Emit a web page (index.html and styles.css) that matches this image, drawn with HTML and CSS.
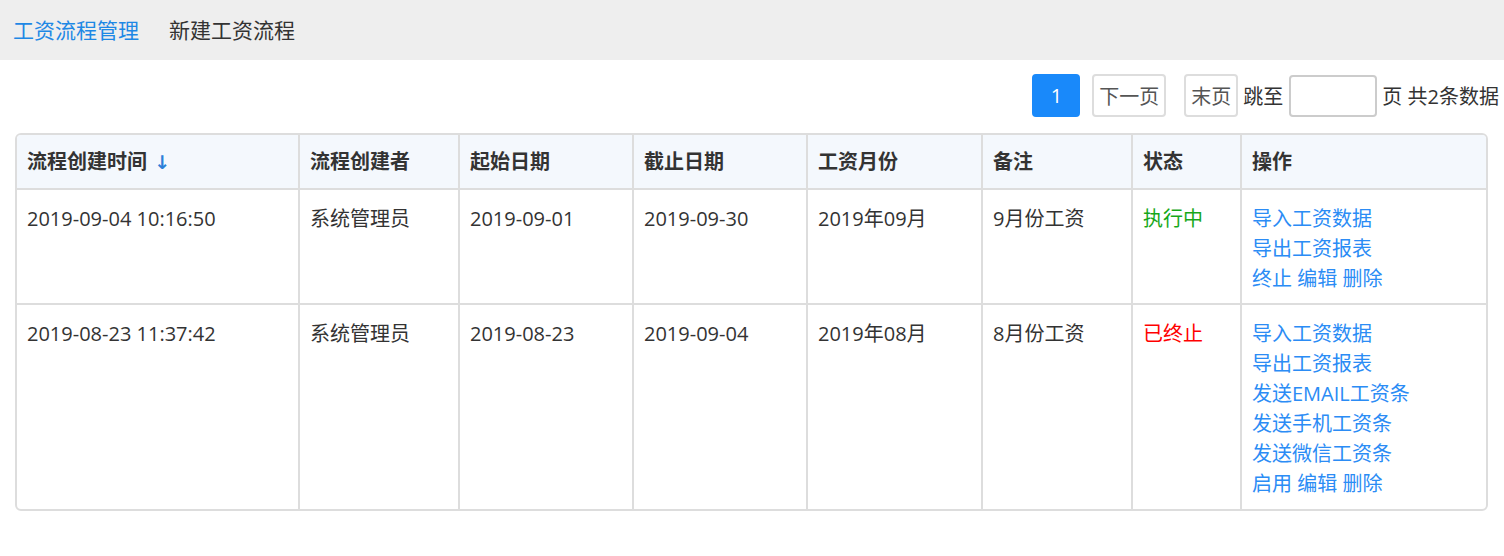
FILE: index.html
```html
<!DOCTYPE html>
<html lang="zh-CN">
<head>
<meta charset="utf-8">
<title>工资流程管理</title>
<link rel="stylesheet" href="styles.css">
</head>
<body>
<header class="topbar">
  <a class="nav-item active">工资流程管理</a>
  <a class="nav-item">新建工资流程</a>
</header>
<main class="content">
  <div class="pager">
    <button class="page-btn current">1</button>
    <button class="page-btn next">下一页</button>
    <button class="page-btn last">末页</button>
    <span class="pager-text">跳至</span>
    <input class="page-input" type="text">
    <span class="pager-text">页 共2条数据</span>
  </div>
  <div class="table-wrap">
    <table class="grid">
      <thead>
        <tr>
          <th class="c1">流程创建时间 <span class="sort">↓</span></th>
          <th class="c2">流程创建者</th>
          <th class="c3">起始日期</th>
          <th class="c4">截止日期</th>
          <th class="c5">工资月份</th>
          <th class="c6">备注</th>
          <th class="c7">状态</th>
          <th class="c8">操作</th>
        </tr>
      </thead>
      <tbody>
        <tr>
          <td>2019-09-04 10:16:50</td>
          <td>系统管理员</td>
          <td>2019-09-01</td>
          <td>2019-09-30</td>
          <td>2019年09月</td>
          <td>9月份工资</td>
          <td class="st-run">执行中</td>
          <td class="ops">
            <a>导入工资数据</a><br>
            <a>导出工资报表</a><br>
            <a>终止</a> <a>编辑</a> <a>删除</a>
          </td>
        </tr>
        <tr>
          <td>2019-08-23 11:37:42</td>
          <td>系统管理员</td>
          <td>2019-08-23</td>
          <td>2019-09-04</td>
          <td>2019年08月</td>
          <td>8月份工资</td>
          <td class="st-stop">已终止</td>
          <td class="ops">
            <a>导入工资数据</a><br>
            <a>导出工资报表</a><br>
            <a>发送EMAIL工资条</a><br>
            <a>发送手机工资条</a><br>
            <a>发送微信工资条</a><br>
            <a>启用</a> <a>编辑</a> <a>删除</a>
          </td>
        </tr>
      </tbody>
    </table>
  </div>
</main>
</body>
</html>
```
FILE: styles.css
```css
* { box-sizing: border-box; }
html, body {
  margin: 0;
  padding: 0;
  background: #fff;
  font-family: "Open Sans", "Noto Sans CJK SC", sans-serif;
  font-size: 20px;
  color: #333;
}
.topbar {
  height: 60px;
  background: #eeeeee;
  display: flex;
  align-items: center;
  gap: 30px;
  padding-left: 13px;
  padding-bottom: 2px;
}
.nav-item {
  font-size: 21px;
  color: #333;
  cursor: pointer;
}
.nav-item.active { color: #1e88e5; }
.content {
  padding: 14px 16px 0 15px;
}
.pager {
  display: flex;
  justify-content: flex-end;
  align-items: center;
  height: 43px;
  margin-right: -11px;
}
.page-btn {
  font-family: inherit;
  font-size: 20px;
  height: 43px;
  border: 2px solid #ddd;
  border-radius: 4px;
  background: #fff;
  color: #555;
  padding: 0 5px;
  margin: 0;
}
.page-btn.current {
  width: 48px;
  background: #1989fa;
  border-color: #1989fa;
  color: #fff;
  margin-right: 12px;
}
.page-btn.next { width: 74px; margin-right: 18px; }
.page-btn.last { width: 54px; margin-right: 5px; }
.pager-text { color: #333; }
.page-input {
  width: 88px;
  height: 42px;
  border: 2px solid #ccc;
  border-radius: 4px;
  margin: 0 5px 0 6px;
  font-size: 20px;
}
.table-wrap {
  margin-top: 16px;
  border: 2px solid #dddddd;
  border-radius: 6px;
  overflow: hidden;
}
.grid {
  width: 100%;
  border-collapse: separate;
  border-spacing: 0;
  table-layout: fixed;
}
.grid th, .grid td {
  border-right: 2px solid #dddddd;
  border-bottom: 2px solid #dddddd;
  text-align: left;
  vertical-align: top;
  line-height: 30px;
  padding: 14px 10px 9px 10px;
}
.grid th:last-child, .grid td:last-child { border-right: none; }
.grid tbody tr:last-child td { border-bottom: none; padding-bottom: 10px; }
.grid th {
  background: #f4f8fd;
  font-weight: bold;
  height: 55px;
  padding-top: 12px;
  padding-bottom: 11px;
  color: #333;
}
.sort {
  color: #2b7fd8;
  font-weight: bold;
  font-family: "DejaVu Sans", sans-serif;
  font-size: 19px;
  margin-left: 2px;
}
.c1 { width: 283px; }
.c2 { width: 160px; }
.c3 { width: 174px; }
.c4 { width: 174px; }
.c5 { width: 175px; }
.c6 { width: 150px; }
.c7 { width: 109px; }
.st-run { color: #17a81a; }
.st-stop { color: #ff0000; }
.ops a { color: #2b8cf5; cursor: pointer; }
```
